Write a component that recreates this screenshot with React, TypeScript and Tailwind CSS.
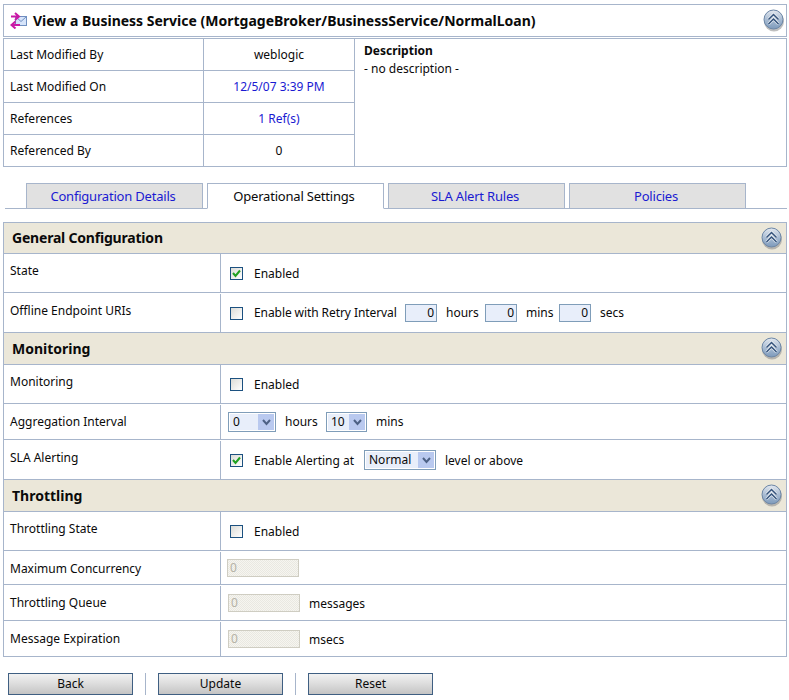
import React from "react";

const B = "border-[#a7b5cb]";

function Collapse() {
  return (
    <svg width="22" height="23" viewBox="0 0 22 23" className="block">
      <defs>
        <linearGradient id="cg" x1="0" y1="0" x2="0" y2="1">
          <stop offset="0" stopColor="#e4e9f0" />
          <stop offset="0.5" stopColor="#a9bcd3" />
          <stop offset="1" stopColor="#7d9abb" />
        </linearGradient>
      </defs>
      <circle cx="11" cy="12.5" r="10" fill="#8a8a8a" opacity="0.55" />
      <circle cx="10.5" cy="10.5" r="9.5" fill="url(#cg)" stroke="#6c86a6" strokeWidth="1" />
      <path d="M5.5 10.5 L10.5 5.5 L15.5 10.5" fill="none" stroke="#ffffff" strokeWidth="3" opacity="0.75" />
      <path d="M5.5 15 L10.5 10 L15.5 15" fill="none" stroke="#ffffff" strokeWidth="3" opacity="0.75" />
      <path d="M5.5 10.5 L10.5 5.5 L15.5 10.5" fill="none" stroke="#34537c" strokeWidth="1.5" />
      <path d="M5.5 15 L10.5 10 L15.5 15" fill="none" stroke="#34537c" strokeWidth="1.5" />
    </svg>
  );
}

function ServiceIcon() {
  return (
    <svg width="18" height="17" viewBox="0 0 18 17" className="block">
      <rect x="5.5" y="4.5" width="11" height="9" fill="#d6e4fa" stroke="#6f8fc0" />
      <path d="M5.5 4.5 L11 9.5 L16.5 4.5" fill="none" stroke="#6f8fc0" />
      <path d="M1 4.5 H8 M5 1 L9 4.5 L5 8" fill="none" stroke="#c91aa6" strokeWidth="2" />
      <path d="M10 13 H2 M5.5 9.5 L1.5 13 L5.5 16.5" fill="none" stroke="#c91aa6" strokeWidth="2" />
    </svg>
  );
}

function Check({ on }: { on?: boolean }) {
  return (
    <span className="flex h-[13px] w-[13px] shrink-0 items-center justify-center border border-[#1c5180] bg-gradient-to-br from-[#dcdcd7] to-white">
      {on && (
        <svg width="9" height="9" viewBox="0 0 9 9">
          <path d="M1 4 L3.5 7 L8 1.5" fill="none" stroke="#21a121" strokeWidth="2" />
        </svg>
      )}
    </span>
  );
}

function Num() {
  return (
    <span className="flex h-[18px] w-[32px] shrink-0 items-center justify-end border border-[#7f9db9] bg-[#e8eefa] pr-[2px]">0</span>
  );
}

function Sel({ value, w }: { value: string; w: string }) {
  return (
    <span className={`flex h-[20px] ${w} shrink-0 items-center justify-between border border-[#7f9db9] bg-white p-px`}>
      <span className="flex h-full flex-1 items-center bg-[#e8eefa] pl-[3px]">{value}</span>
      <span className="flex h-full w-[16px] items-center justify-center bg-[#b9c9ef]">
        <svg width="9" height="7" viewBox="0 0 9 7">
          <path d="M1 1 L4.5 5 L8 1" fill="none" stroke="#4d6185" strokeWidth="2" />
        </svg>
      </span>
    </span>
  );
}

function Disabled({ ml }: { ml?: string }) {
  return (
    <span
      className={`flex h-[18px] w-[72px] shrink-0 items-center border border-[#cfcdc2] bg-[repeating-conic-gradient(#f6f5f0_0_25%,#e9e8e1_0_50%)] bg-[length:2px_2px] pl-[2px] text-[#b5b2a6] ${ml ?? ""}`}
    >
      0
    </span>
  );
}

function Header({ title, h, track }: { title: string; h: string; track?: string }) {
  return (
    <div className={`flex ${h} items-center justify-between border-b ${B} bg-[#ebe7d9] pl-[8px] pr-[3px]`}>
      <span className={`text-[14px] font-bold leading-none text-[#0a0a0a] ${track ?? ""}`}>{title}</span>
      <Collapse />
    </div>
  );
}

function Row({
  label,
  h,
  pt,
  gap,
  children,
}: {
  label: string;
  h: string;
  pt: string;
  gap?: boolean;
  children: React.ReactNode;
}) {
  return (
    <div className={`flex ${h} border-b ${B}`}>
      <div className={`w-[216px] shrink-0 pl-[6px] ${pt}`}>{label}</div>
      <div className={`flex flex-1 items-center border-l ${B} pl-[8px] ${gap ? "mt-px" : ""}`}>{children}</div>
    </div>
  );
}

function Tab({ label, active }: { label: string; active?: boolean }) {
  return (
    <div
      className={`flex h-[26px] w-[177px] items-center justify-center border ${B} pr-[3px] text-[13px] tracking-[-0.2px] ${
        active ? "border-b-white bg-white text-[#0a0a0a]" : "bg-[#e1e1e1] text-[#1a1ad2]"
      }`}
    >
      {label}
    </div>
  );
}

function Btn({ label }: { label: string }) {
  return (
    <div className="flex h-[22px] w-[125px] items-center justify-center border border-[#3f5f82] bg-gradient-to-b from-[#f2f2f2] via-[#dcdcdc] to-[#c4c4c4] text-[#0a0a0a]">
      {label}
    </div>
  );
}

export default function App() {
  return (
    <div className="h-[700px] w-[789px] overflow-hidden bg-white pl-[3px] pr-[2px] pt-[4px] font-['Noto_Sans',sans-serif] text-[12px] leading-[14px] text-[#0a0a0a]">
      <div className={`flex h-[33px] items-center justify-between border ${B} pl-[6px] pr-[1px]`}>
        <div className="flex items-center gap-[5px]">
          <ServiceIcon />
          <span className="text-[14px] font-bold leading-none">
            View a Business Service (MortgageBroker/BusinessService/NormalLoan)
          </span>
        </div>
        <Collapse />
      </div>

      <div className={`mt-[1px] flex h-[129px] border ${B}`}>
        <div className="w-[350px] shrink-0">
          {[
            ["Last Modified By", "weblogic", false],
            ["Last Modified On", "12/5/07 3:39 PM", true],
            ["References", "1 Ref(s)", true],
            ["Referenced By", "0", false],
          ].map(([k, v, link], i) => (
            <div key={i} className={`flex h-[32px] ${i < 3 ? `border-b ${B}` : ""}`}>
              <div className="flex w-[199px] items-center pl-[6px]">{k}</div>
              <div className={`flex flex-1 items-center justify-center border-l ${B} ${link ? "text-[#1a1ad2]" : ""}`}>
                {v}
              </div>
            </div>
          ))}
        </div>
        <div className={`flex-1 border-l ${B} pl-[9px] pt-[5px]`}>
          <div className="font-bold">Description</div>
          <div className="mt-[4px]">- no description -</div>
        </div>
      </div>

      <div className={`ml-[2px] mt-[16px] flex h-[26px] gap-[4px] border-b ${B} pl-[21px]`}>
        <Tab label="Configuration Details" />
        <Tab label="Operational Settings" active />
        <Tab label="SLA Alert Rules" />
        <Tab label="Policies" />
      </div>

      <div className={`mt-[13px] border-x border-t ${B}`}>
        <Header title="General Configuration" h="h-[31px]" track="tracking-[-0.2px]" />
        <Row label="State" h="h-[39px]" pt="pt-[10px]">
          <span className="ml-px mt-px flex items-center gap-[11px]"><Check on />Enabled</span>
        </Row>
        <Row label="Offline Endpoint URIs" h="h-[40px]" pt="pt-[11px]" gap>
          <span className="ml-px flex w-[175px] shrink-0 items-center gap-[11px] tracking-[-0.08px]"><Check />Enable with Retry Interval</span>
          <Num />
          <span className="ml-[9px] w-[39px]">hours</span>
          <Num />
          <span className="ml-[9px] w-[33px]">mins</span>
          <Num />
          <span className="ml-[9px]">secs</span>
        </Row>
        <Header title="Monitoring" h="h-[32px]" />
        <Row label="Monitoring" h="h-[39px]" pt="pt-[10px]">
          <span className="ml-px mt-px flex items-center gap-[11px]"><Check />Enabled</span>
        </Row>
        <Row label="Aggregation Interval" h="h-[36px]" pt="pt-[11px]" gap>
          <span className="-ml-px flex items-center">
            <Sel value="0" w="w-[48px]" />
            <span className="ml-[9px] w-[41px]">hours</span>
            <Sel value="10" w="w-[41px]" />
            <span className="ml-[9px]">mins</span>
          </span>
        </Row>
        <Row label="SLA Alerting" h="h-[40px]" pt="pt-[11px]" gap>
          <span className="ml-px mt-px flex w-[134px] shrink-0 items-center gap-[11px]"><Check on />Enable Alerting at</span>
          <Sel value="Normal" w="w-[72px]" />
          <span className="ml-[9px] mt-px">level or above</span>
        </Row>
        <Header title="Throttling" h="h-[32px]" />
        <Row label="Throttling State" h="h-[39px]" pt="pt-[10px]">
          <span className="ml-px mt-px flex items-center gap-[11px]"><Check />Enabled</span>
        </Row>
        <Row label="Maximum Concurrency" h="h-[34px]" pt="pt-[11px]" gap>
          <Disabled ml="-ml-[2px]" />
        </Row>
        <Row label="Throttling Queue" h="h-[36px]" pt="pt-[11px]" gap>
          <Disabled ml="-ml-px" />
          <span className="ml-[9px] mt-px">messages</span>
        </Row>
        <Row label="Message Expiration" h="h-[36px]" pt="pt-[11px]" gap>
          <Disabled ml="-ml-px" />
          <span className="ml-[9px] mt-px">msecs</span>
        </Row>
      </div>

      <div className="ml-[5px] mt-[16px] flex items-center">
        <Btn label="Back" />
        <div className="mx-[12px] h-[22px] w-px bg-[#a7b5cb]" />
        <Btn label="Update" />
        <div className="mx-[12px] h-[22px] w-px bg-[#a7b5cb]" />
        <Btn label="Reset" />
      </div>
    </div>
  );
}
